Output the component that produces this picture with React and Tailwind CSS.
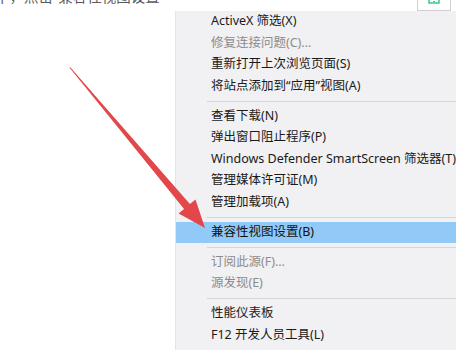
const items = [
  { label: "ActiveX 筛选(X)" },
  { label: "修复连接问题(C)...", disabled: true },
  { label: "重新打开上次浏览页面(S)" },
  { label: "将站点添加到“应用”视图(A)" },
  { sep: true },
  { label: "查看下载(N)" },
  { label: "弹出窗口阻止程序(P)" },
  { label: "Windows Defender SmartScreen 筛选器(T)" },
  { label: "管理媒体许可证(M)" },
  { label: "管理加载项(A)" },
  { sep: true },
  { label: "兼容性视图设置(B)", active: true },
  { sep: true },
  { label: "订阅此源(F)...", disabled: true },
  { label: "源发现(E)", disabled: true },
  { sep: true },
  { label: "性能仪表板" },
  { label: "F12 开发人员工具(L)" },
];

function MenuRow({ item }) {
  if (item.sep) {
    return (
      <div className="h-[8.5px] flex items-center pl-[31px]">
        <div className="h-px w-full bg-[#d6d6d8]" />
      </div>
    );
  }
  let cls = "h-[21.5px] flex items-center pl-[35px] whitespace-nowrap text-[12.5px]";
  if (item.active) cls += " bg-[#91c9f7] text-[#111]";
  else if (item.disabled) cls += " text-[#8c8c8c]";
  else cls += " text-[#1a1a1a]";
  return <div className={cls}>{item.label}</div>;
}

export default function App() {
  return (
    <div className="relative w-[456px] h-[350px] overflow-hidden bg-white font-['Noto_Sans','Noto_Sans_CJK_SC',sans-serif]">
      {/* top strip, the caption above is cut off */}
      <div className="flex h-[11px]">
        <div className="flex-1 overflow-hidden">
          <div className="-mt-[11px] -ml-[5px] text-[14.5px] leading-[14.5px] text-[#5a5a5a] whitespace-nowrap">
            中，点击“兼容性视图设置”
          </div>
        </div>
        <div className="mr-[5px] w-[34px] h-[11px] border-x border-b border-[#cfcfcf] flex justify-center">
          <svg width="12" height="4" viewBox="0 0 12 4">
            <path d="M1 0 V3 H11 V0" fill="none" stroke="#2ecf8c" strokeWidth="1.5" />
            <path d="M5 1.5 H7" stroke="#2ecf8c" strokeWidth="1.2" />
          </svg>
        </div>
      </div>

      <div className="flex h-[339px]">
        <div className="w-[177px]" />
        <div className="flex-1 bg-[#f1f0f2] border-l border-[#e4e4e6]">
          {items.map((it, i) => (
            <MenuRow key={i} item={it} />
          ))}
        </div>
      </div>

      {/* red arrow pointing at the item */}
      <svg className="absolute inset-0 pointer-events-none" width="456" height="350" viewBox="0 0 456 350">
        <polygon
          points="70,67 189.9,204 195.5,199.5 205,228 178.6,213.4 184.1,209 69.4,67.5"
          fill="#e2474b"
        />
      </svg>
    </div>
  );
}
